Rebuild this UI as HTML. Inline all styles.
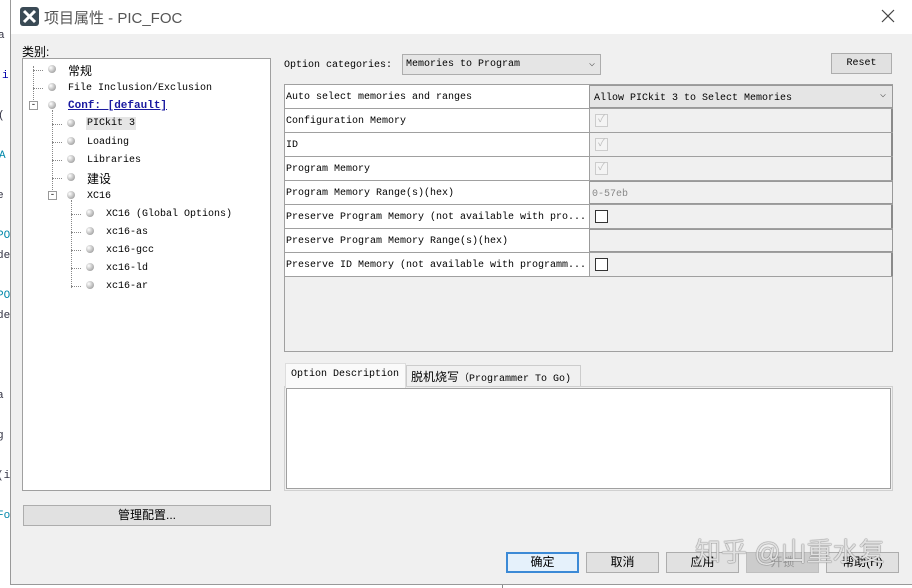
<!DOCTYPE html>
<html><head><meta charset="utf-8"><style>
*{box-sizing:border-box;margin:0;padding:0}
body{width:912px;height:588px;overflow:hidden;background:#fff;position:relative;font-family:"Liberation Mono","Noto Sans CJK SC",monospace;font-size:10px;color:#000}
.a{position:absolute}
.cj{font-family:"Liberation Sans","Noto Sans CJK SC",sans-serif;font-size:12px}
.btn{position:absolute;height:21px;border:1px solid #adadad;background:#e1e1e1;text-align:center;line-height:19px;font-family:"Liberation Sans","Noto Sans CJK SC",sans-serif;font-size:12px}
.row{position:absolute;left:0;width:608px;height:24px;border-bottom:1px solid #a0a0a0}
.row .l{position:absolute;left:1px;top:7px;white-space:nowrap}
.row .r{position:absolute;left:304px;top:0;width:304px;height:23px;background:#f0f0f0;border-left:1px solid #a0a0a0;border-right:2px solid #8a8a8a}
.cb{position:absolute;left:5px;top:5px;width:13px;height:13px;border:1px solid #333;background:#fff}
.cbd{border-color:#ccc;background:#f4f4f4;color:#bbb;font-size:10px;line-height:11px;text-align:center}
.ti{position:absolute;white-space:nowrap}
.dot{position:absolute;width:8px;height:8px;border-radius:50%;background:radial-gradient(circle at 35% 35%,#fff,#aaa 70%,#888)}
.dl{position:absolute;border-left:1px dotted #888}
.dh{position:absolute;border-top:1px dotted #888;width:10px}
</style></head><body>
<div class="a" style="left:0;top:0;width:10px;height:588px;background:#fff;overflow:hidden;font-size:11px;color:#334">
<div class="a" style="top:30px;left:-2px">a</div><div class="a" style="top:70px;left:2px;color:#00a">i</div><div class="a" style="top:110px;left:-2px">(</div><div class="a" style="top:150px;left:-1px;color:#08a">A</div><div class="a" style="top:190px;left:-3px">e</div><div class="a" style="top:230px;left:-3px;color:#08a">PO</div><div class="a" style="top:250px;left:-3px">de</div><div class="a" style="top:290px;left:-3px;color:#08a">PO</div><div class="a" style="top:310px;left:-3px">de</div><div class="a" style="top:390px;left:-3px">a</div><div class="a" style="top:430px;left:-3px">g</div><div class="a" style="top:470px;left:-3px">(i</div><div class="a" style="top:510px;left:-3px;color:#08a">Fo</div>
</div>
<div class="a" style="left:10px;top:0;width:902px;height:585px;background:#f0f0f0;border-left:1px solid #999;border-bottom:1px solid #999"></div>
<div class="a" style="left:11px;top:0;width:901px;height:34px;background:#fff"></div>
<svg class="a" style="left:20px;top:7px" width="19" height="19" viewBox="0 0 19 19"><rect x="0" y="0" width="19" height="19" rx="3" fill="#3a4a55"/><path d="M4 4L15 15M15 4L4 15" stroke="#fff" stroke-width="3"/></svg>
<div class="a" style="left:44px;top:7px;font-family:'Liberation Sans','Noto Sans CJK SC',sans-serif;font-size:15px;color:#555">项目属性 - PIC_FOC</div>
<svg class="a" style="left:881px;top:9px" width="14" height="14"><path d="M1 1L13 13M13 1L1 13" stroke="#444" stroke-width="1.2"/></svg>

<div class="a cj" style="left:22px;top:43px">类别:</div>
<div class="a" style="left:22px;top:58px;width:249px;height:433px;background:#fff;border:1px solid #a0a0a0"></div>
<div class="dl" style="left:33px;top:66px;height:40px"></div>
<div class="dh" style="left:33px;top:70px"></div><div class="dh" style="left:33px;top:88px"></div>
<div class="dl" style="left:52px;top:110px;height:88px"></div>
<div class="dl" style="left:71px;top:200px;height:88px"></div>
<div class="dh" style="left:52px;top:124px"></div><div class="dh" style="left:52px;top:142px"></div><div class="dh" style="left:52px;top:160px"></div><div class="dh" style="left:52px;top:178px"></div>
<div class="dh" style="left:71px;top:214px"></div><div class="dh" style="left:71px;top:232px"></div><div class="dh" style="left:71px;top:250px"></div><div class="dh" style="left:71px;top:268px"></div><div class="dh" style="left:71px;top:286px"></div>
<div class="a" style="left:29px;top:101px;width:9px;height:9px;border:1px solid #999;background:#fff;font-size:9px;line-height:6px;text-align:center">-</div>
<div class="a" style="left:48px;top:191px;width:9px;height:9px;border:1px solid #999;background:#fff;font-size:9px;line-height:6px;text-align:center">-</div>
<div class="dot" style="left:48px;top:65px"></div><div class="dot" style="left:48px;top:83px"></div><div class="dot" style="left:48px;top:101px"></div>
<div class="dot" style="left:67px;top:119px"></div><div class="dot" style="left:67px;top:137px"></div><div class="dot" style="left:67px;top:155px"></div><div class="dot" style="left:67px;top:173px"></div><div class="dot" style="left:67px;top:191px"></div>
<div class="dot" style="left:86px;top:209px"></div><div class="dot" style="left:86px;top:227px"></div><div class="dot" style="left:86px;top:245px"></div><div class="dot" style="left:86px;top:263px"></div><div class="dot" style="left:86px;top:281px"></div>
<div class="ti cj" style="left:68px;top:62px">常规</div>
<div class="ti" style="left:68px;top:83px">File Inclusion/Exclusion</div>
<div class="ti" style="left:68px;top:100px;color:#1a1aa0;font-weight:bold;font-size:11px;text-decoration:underline">Conf: [default]</div>
<div class="ti" style="left:86px;top:117px;background:#e5e5e5;padding:1px 1px">PICkit 3</div>
<div class="ti" style="left:87px;top:137px">Loading</div>
<div class="ti" style="left:87px;top:155px">Libraries</div>
<div class="ti cj" style="left:87px;top:170px">建设</div>
<div class="ti" style="left:87px;top:191px">XC16</div>
<div class="ti" style="left:106px;top:209px">XC16 (Global Options)</div>
<div class="ti" style="left:106px;top:227px">xc16-as</div>
<div class="ti" style="left:106px;top:245px">xc16-gcc</div>
<div class="ti" style="left:106px;top:263px">xc16-ld</div>
<div class="ti" style="left:106px;top:281px">xc16-ar</div>
<div class="btn" style="left:23px;top:505px;width:248px">管理配置...</div>

<div class="a" style="left:284px;top:60px">Option categories:</div>
<div class="a" style="left:402px;top:54px;width:199px;height:21px;border:1px solid #adadad;background:#e5e5e5;padding:4px 0 0 3px">Memories to Program<span class="a" style="right:5px;top:3px;color:#555">⌵</span></div>
<div class="btn" style="left:831px;top:53px;width:61px;font-family:'Liberation Mono',monospace;font-size:10px">Reset</div>

<div class="a" style="left:284px;top:84px;width:609px;height:268px;background:#f0f0f0;border:1px solid #a0a0a0">
<div class="a" style="left:0;top:0;width:304px;height:192px;background:#fff"></div>
<div class="row" style="top:0"><span class="l">Auto select memories and ranges</span><div class="r" style="background:#e5e5e5;border:1px solid #999"><span class="a" style="left:4px;top:7px">Allow PICkit 3 to Select Memories</span><span class="a" style="right:6px;top:3px;color:#555">⌵</span></div></div>
<div class="row" style="top:24px"><span class="l">Configuration Memory</span><div class="r"><div class="cb cbd">✓</div></div></div>
<div class="row" style="top:48px"><span class="l">ID</span><div class="r"><div class="cb cbd">✓</div></div></div>
<div class="row" style="top:72px"><span class="l">Program Memory</span><div class="r"><div class="cb cbd">✓</div></div></div>
<div class="row" style="top:96px"><span class="l">Program Memory Range(s)(hex)</span><div class="r" style="border:1px solid #999"><span class="a" style="left:2px;top:7px;color:#888">0-57eb</span></div></div>
<div class="row" style="top:120px"><span class="l">Preserve Program Memory (not available with pro...</span><div class="r"><div class="cb"></div></div></div>
<div class="row" style="top:144px"><span class="l">Preserve Program Memory Range(s)(hex)</span><div class="r" style="border:1px solid #999"></div></div>
<div class="row" style="top:168px"><span class="l">Preserve ID Memory (not available with programm...</span><div class="r"><div class="cb"></div></div></div>
</div>

<div class="a" style="left:284px;top:386px;width:609px;height:105px;border:1px solid #d0d0d0;background:#f0f0f0"></div>
<div class="a" style="left:286px;top:388px;width:605px;height:101px;background:#fff;border:1px solid #a0a0a0"></div>
<div class="a" style="left:285px;top:363px;width:121px;height:25px;background:#fafafa;border:1px solid #ddd;border-bottom:none;padding:5px 0 0 5px">Option Description</div>
<div class="a" style="left:406px;top:365px;width:175px;height:21px;background:#f0f0f0;border:1px solid #ccc;border-bottom:none;padding:2px 0 0 4px"><span class="cj">脱机烧写</span>（Programmer To Go)</div>

<div class="btn" style="left:506px;top:552px;width:73px;border:2px solid #3c8ad6;background:#e5f1fb;line-height:17px">确定</div>
<div class="btn" style="left:586px;top:552px;width:73px">取消</div>
<div class="btn" style="left:666px;top:552px;width:73px">应用</div>
<div class="btn" style="left:746px;top:552px;width:73px;background:#ccc;border-color:#bfbfbf;color:#999">开锁</div>
<div class="btn" style="left:826px;top:552px;width:73px">帮助(H)</div>
<div class="a" style="left:695px;top:532px;font-family:'Liberation Sans','Noto Sans CJK SC',sans-serif;font-size:26px;color:rgba(255,255,255,0.8);text-shadow:0 0 1px #666,0 0 1px #666;white-space:nowrap">知乎 @山重水复</div>
<div class="a" style="left:502px;top:585px;width:1px;height:3px;background:#888"></div>
</body></html>
